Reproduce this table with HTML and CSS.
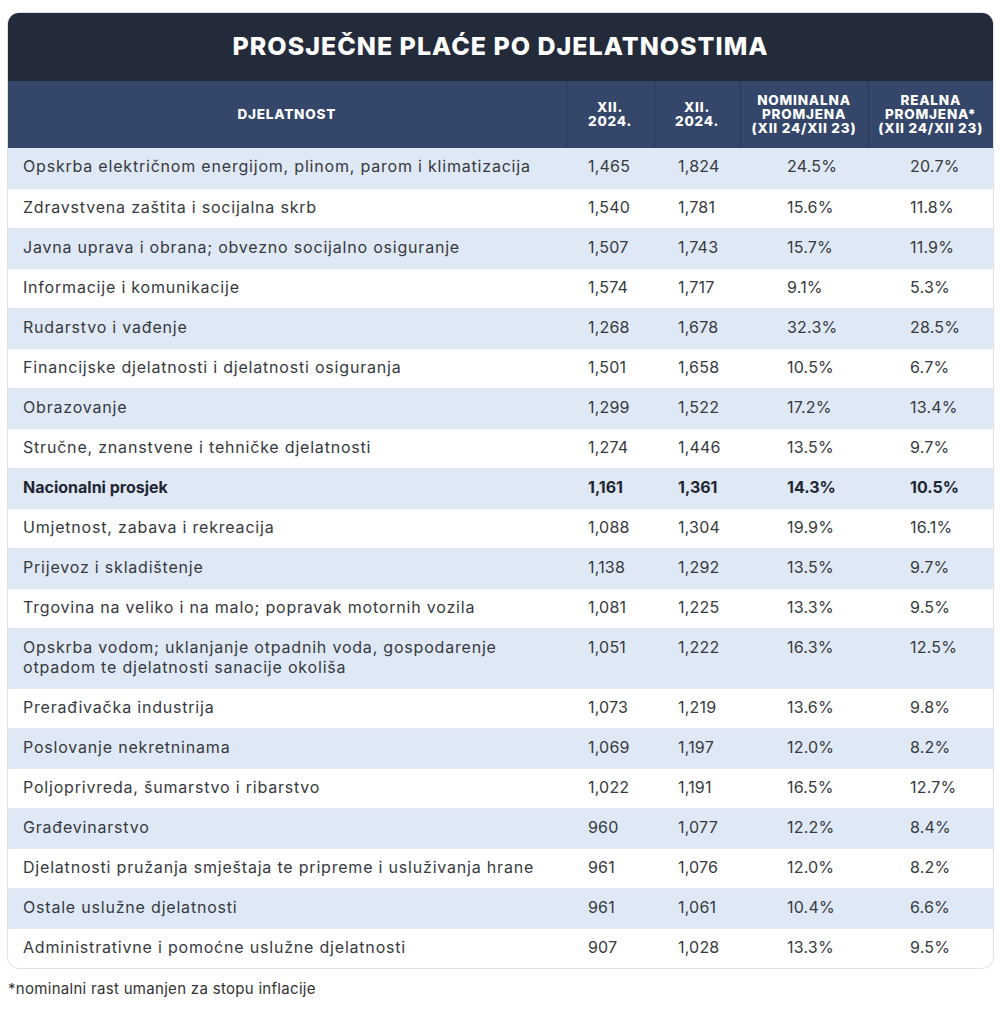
FILE: index.html
```html
<!DOCTYPE html>
<html lang="hr">
<head>
<meta charset="utf-8">
<title>Prosječne plaće po djelatnostima</title>
<link rel="stylesheet" href="styles.css">
</head>
<body>
<div class="card">
  <div class="title">PROSJEČNE PLAĆE PO DJELATNOSTIMA</div>
  <table class="tbl">
    <colgroup>
      <col class="c0"><col class="c1"><col class="c2"><col class="c3"><col class="c4">
    </colgroup>
    <thead>
      <tr>
        <th>DJELATNOST</th>
        <th><span class="hl">XII.</span><span class="hl">2024.</span></th>
        <th><span class="hl">XII.</span><span class="hl">2024.</span></th>
        <th><span class="hl">NOMINALNA</span><span class="hl">PROMJENA</span><span class="hl">(XII 24/XII 23)</span></th>
        <th><span class="hl">REALNA</span><span class="hl">PROMJENA*</span><span class="hl">(XII 24/XII 23)</span></th>
      </tr>
    </thead>
    <tbody>
      <tr><td>Opskrba električnom energijom, plinom, parom i klimatizacija</td><td>1,465</td><td>1,824</td><td>24.5%</td><td>20.7%</td></tr>
      <tr><td>Zdravstvena zaštita i socijalna skrb</td><td>1,540</td><td>1,781</td><td>15.6%</td><td>11.8%</td></tr>
      <tr><td>Javna uprava i obrana; obvezno socijalno osiguranje</td><td>1,507</td><td>1,743</td><td>15.7%</td><td>11.9%</td></tr>
      <tr><td>Informacije i komunikacije</td><td>1,574</td><td>1,717</td><td>9.1%</td><td>5.3%</td></tr>
      <tr><td>Rudarstvo i vađenje</td><td>1,268</td><td>1,678</td><td>32.3%</td><td>28.5%</td></tr>
      <tr><td>Financijske djelatnosti i djelatnosti osiguranja</td><td>1,501</td><td>1,658</td><td>10.5%</td><td>6.7%</td></tr>
      <tr><td>Obrazovanje</td><td>1,299</td><td>1,522</td><td>17.2%</td><td>13.4%</td></tr>
      <tr><td>Stručne, znanstvene i tehničke djelatnosti</td><td>1,274</td><td>1,446</td><td>13.5%</td><td>9.7%</td></tr>
      <tr class="avg"><td>Nacionalni prosjek</td><td>1,161</td><td>1,361</td><td>14.3%</td><td>10.5%</td></tr>
      <tr><td>Umjetnost, zabava i rekreacija</td><td>1,088</td><td>1,304</td><td>19.9%</td><td>16.1%</td></tr>
      <tr><td>Prijevoz i skladištenje</td><td>1,138</td><td>1,292</td><td>13.5%</td><td>9.7%</td></tr>
      <tr><td>Trgovina na veliko i na malo; popravak motornih vozila</td><td>1,081</td><td>1,225</td><td>13.3%</td><td>9.5%</td></tr>
      <tr class="tall"><td>Opskrba vodom; uklanjanje otpadnih voda, gospodarenje<br>otpadom te djelatnosti sanacije okoliša</td><td>1,051</td><td>1,222</td><td>16.3%</td><td>12.5%</td></tr>
      <tr><td>Prerađivačka industrija</td><td>1,073</td><td>1,219</td><td>13.6%</td><td>9.8%</td></tr>
      <tr><td>Poslovanje nekretninama</td><td>1,069</td><td>1,197</td><td>12.0%</td><td>8.2%</td></tr>
      <tr><td>Poljoprivreda, šumarstvo i ribarstvo</td><td>1,022</td><td>1,191</td><td>16.5%</td><td>12.7%</td></tr>
      <tr><td>Građevinarstvo</td><td>960</td><td>1,077</td><td>12.2%</td><td>8.4%</td></tr>
      <tr><td>Djelatnosti pružanja smještaja te pripreme i usluživanja hrane</td><td>961</td><td>1,076</td><td>12.0%</td><td>8.2%</td></tr>
      <tr><td>Ostale uslužne djelatnosti</td><td>961</td><td>1,061</td><td>10.4%</td><td>6.6%</td></tr>
      <tr><td>Administrativne i pomoćne uslužne djelatnosti</td><td>907</td><td>1,028</td><td>13.3%</td><td>9.5%</td></tr>
    </tbody>
  </table>
</div>
<p class="note">*nominalni rast umanjen za stopu inflacije</p>
</body>
</html>
```

FILE: styles.css
```css
* { box-sizing: border-box; }
html, body { background: #ffffff; }
body {
  margin: 0;
  padding: 12px 7px 0 7px;
  font-family: Inter, "Open Sans", "Liberation Sans", sans-serif;
  color: #363a40;
}
.card {
  width: 987px;
  border: 1px solid #dfe2e7;
  border-radius: 12px;
  overflow: hidden;
  background: #fff;
}
.title {
  height: 68px;
  background: #232b3b;
  color: #fff;
  font-weight: 800;
  font-size: 25px;
  letter-spacing: 1px;
  display: flex;
  align-items: center;
  justify-content: center;
  padding-bottom: 2px;
}
.tbl {
  width: 100%;
  border-collapse: collapse;
  table-layout: fixed;
}
.c0 { width: 558px; }
.c1 { width: 88px; }
.c2 { width: 86px; }
.c3 { width: 128px; }
.c4 { width: auto; }
.tbl thead th {
  height: 67px;
  background: #34466a;
  color: #fff;
  font-weight: 800;
  font-size: 13.5px;
  letter-spacing: 0.8px;
  text-align: center;
  vertical-align: middle;
  border-left: 1px solid #2a3858;
  padding: 0 2px 2px;
  white-space: nowrap;
}
.hl {
  display: block;
  height: 14px;
  line-height: 14px;
  overflow: visible;
}
.tbl thead th:first-child { border-left: none; }
.tbl tbody td {
  height: 40px;
  font-size: 16px;
  padding: 0 0 3px 0;
  vertical-align: middle;
  border-top: 1px solid #e3e7ee;
  white-space: nowrap;
}
.tbl tbody tr:nth-child(odd) td { background: #dfe8f5; }
.tbl tbody tr:first-child td { border-top: none; }
.tbl tbody td:nth-child(1) { padding-left: 15px; letter-spacing: 0.8px; }
.tbl tbody td:nth-child(2) { padding-left: 22px; letter-spacing: 0.2px; }
.tbl tbody td:nth-child(3) { padding-left: 24px; letter-spacing: 0.2px; }
.tbl tbody td:nth-child(4) { padding-left: 47px; letter-spacing: 0.2px; }
.tbl tbody td:nth-child(5) { padding-left: 42px; letter-spacing: 0.2px; }
.tbl tbody tr.tall td {
  height: 60px;
  vertical-align: top;
  padding-top: 8px;
  padding-bottom: 0;
  line-height: 20px;
}
.tbl tbody tr.avg td { font-weight: 700; color: #1f2633; letter-spacing: 0; }
.note {
  margin: 10px 0 0 1px;
  font-size: 15px;
  letter-spacing: 0.3px;
  color: #333;
}
```
